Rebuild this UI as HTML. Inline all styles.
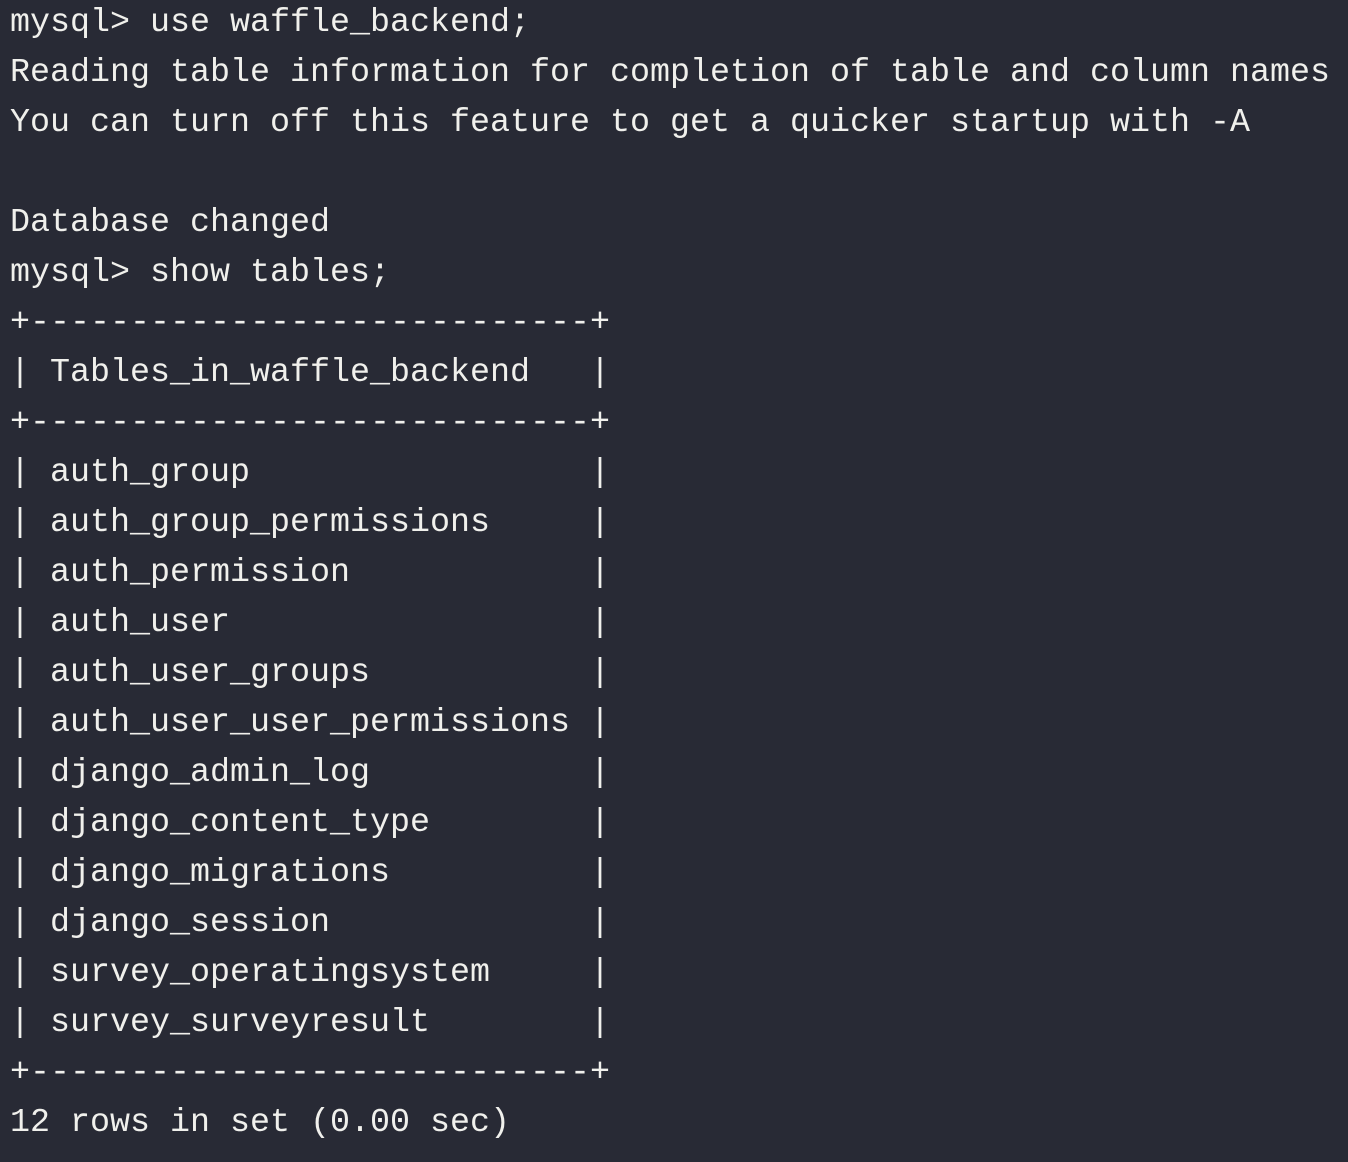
<!DOCTYPE html>
<html><head><meta charset="utf-8"><style>
html,body{margin:0;padding:0;background:#282a35;width:1348px;height:1162px;overflow:hidden}
pre{margin:0;padding:0 0 0 10px;position:relative;top:-2px;font-family:"Liberation Mono",monospace;font-size:33.33px;line-height:50px;color:#f0f0ec;white-space:pre}
</style></head><body><pre>mysql&gt; use waffle_backend;
Reading table information for completion of table and column names
You can turn off this feature to get a quicker startup with -A

Database changed
mysql&gt; show tables;
+----------------------------+
| Tables_in_waffle_backend   |
+----------------------------+
| auth_group                 |
| auth_group_permissions     |
| auth_permission            |
| auth_user                  |
| auth_user_groups           |
| auth_user_user_permissions |
| django_admin_log           |
| django_content_type        |
| django_migrations          |
| django_session             |
| survey_operatingsystem     |
| survey_surveyresult        |
+----------------------------+
12 rows in set (0.00 sec)</pre></body></html>
